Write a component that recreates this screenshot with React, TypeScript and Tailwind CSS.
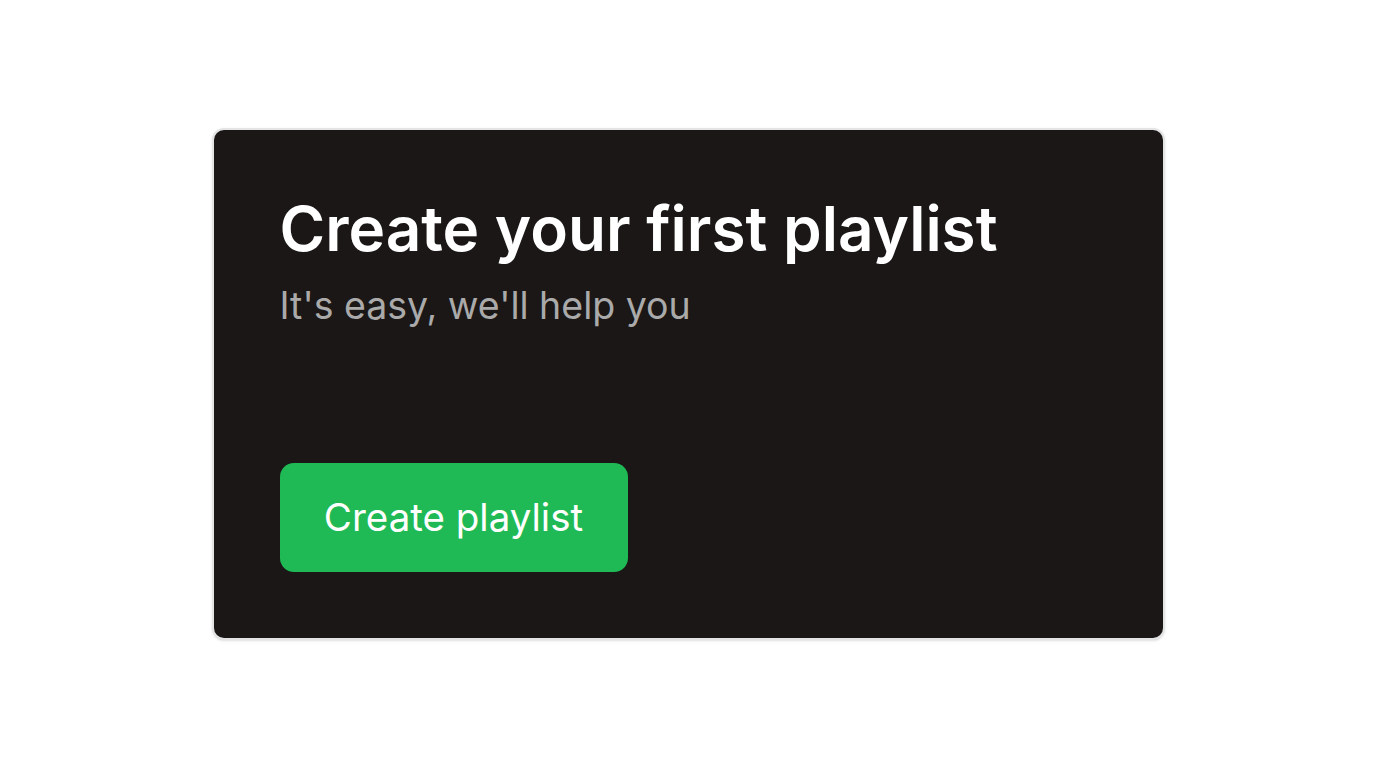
export default function App() {
  return (
    <div className="min-h-screen w-full bg-white flex items-center justify-center" style={{ fontFamily: "Inter, 'Noto Sans', sans-serif" }}>
      <div className="w-[953px] h-[512px] bg-[#1b1716] border-2 border-[#e4e4e4] rounded-[12px] shadow-sm flex flex-col px-[66px] pt-[68px] pb-[66px]">
        <h1 className="text-[62px] leading-none font-semibold text-white">Create your first playlist</h1>
        <p className="text-[37.5px] leading-none text-[#aaaaaa] mt-[27px]">It's easy, we'll help you</p>
        <button className="mt-auto w-[348px] h-[109px] bg-[#1fba55] rounded-[14px] text-white text-[38.5px]">
          Create playlist
        </button>
      </div>
    </div>
  )
}
